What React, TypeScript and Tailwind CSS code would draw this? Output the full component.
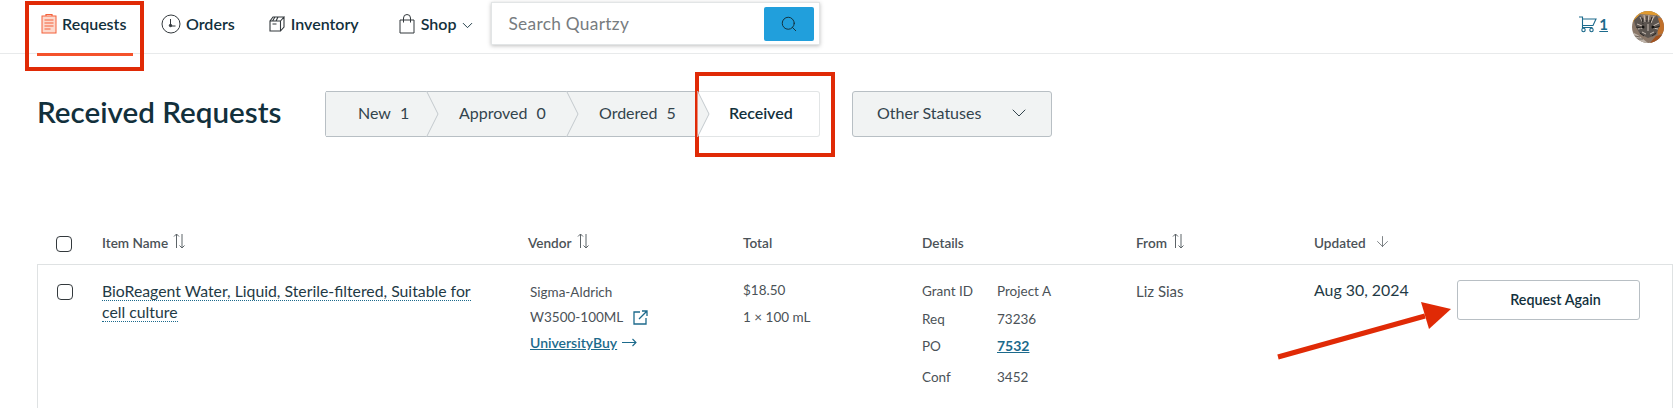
import React from 'react';
import { ChevronDown, Search, ArrowDown } from 'lucide-react';

const SortIcon = () => (
  <svg width="13" height="16" viewBox="0 0 13 16" fill="none" stroke="#5d6468" strokeWidth="1" className="ml-[5px] -mt-[4px]">
    <path d="M3.500 15V1M1 3.500 3.500 1 6 3.500M9 1v14M6.500 12.500 9 15l2.500-2.500" />
  </svg>
);

const Clipboard = () => (
  <svg width="16" height="21" viewBox="0 0 16 21" fill="none" stroke="#f4613a" strokeWidth="1">
    <rect x="1" y="3" width="14" height="17" fill="#fcd9cd" />
    <path d="M5 3V1.500h6V3M3.500 7h9M3.500 10h9M3.500 13h9M3.500 16h6" strokeWidth="1.200" />
  </svg>
);

const Clock = () => (
  <svg width="20" height="20" viewBox="0 0 20 20" fill="none" stroke="#33393d" strokeWidth="1">
    <circle cx="10" cy="10" r="9" />
    <path d="M9.500 5v7h5" />
    <circle cx="9.500" cy="11.500" r="1.200" fill="#33393d" />
  </svg>
);

const Box = () => (
  <svg width="16" height="16" viewBox="0 0 16 16" fill="none" stroke="#33393d" strokeWidth="1.100">
    <path d="M1 5h10.500v10H1zM1 5l3-4h11l-3.500 4M15 1v10l-3.500 4M3.500 8h4M6 1 3.500 5M9 1 7 5" />
  </svg>
);

const Bag = () => (
  <svg width="16" height="20" viewBox="0 0 16 20" fill="none" stroke="#33393d" strokeWidth="1">
    <path d="M1 6h14v13H1zM4.500 8.500V4a3.500 3.500 0 0 1 7 0v4.500" />
  </svg>
);

const Cart = () => (
  <svg width="18" height="17" viewBox="0 0 18 17" fill="none" stroke="#1c6a8c" strokeWidth="1.100">
    <path d="M0 1h3.500v10.500h10M3.500 3h13.500l-3 6.500H3.500" />
    <circle cx="4.500" cy="14" r="1.700" />
    <circle cx="12.500" cy="14" r="1.700" />
  </svg>
);

const LinkOut = () => (
  <svg width="15" height="15" viewBox="0 0 15 15" fill="none" stroke="#1c6a8c" strokeWidth="1.300">
    <path d="M7 2H1v12h12V8M6 9l8-8M9 1h5v5" />
  </svg>
);

const LongArrow = () => (
  <svg width="15" height="9" viewBox="0 0 15 9" fill="none" stroke="#1c6a8c" strokeWidth="1.100">
    <path d="M0 4.500h14M10.500 1 14 4.500 10.500 8" />
  </svg>
);

const Avatar = () => (
  <svg width="32" height="32" viewBox="0 0 32 32">
    <defs>
      <clipPath id="face"><circle cx="16" cy="16" r="16" /></clipPath>
    </defs>
    <g clipPath="url(#face)">
      <rect width="32" height="32" fill="#8a7768" />
      <path d="M0 0h32v6L22 4 8 3 0 12z" fill="#e09a2f" />
      <path d="M24 8l8-2v16l-6 2z" fill="#c0702b" />
      <path d="M2 9l6-5 5 5h7l5-5 3 10-4 10-8 3-8-4-5-9z" fill="#5c5550" />
      <path d="M8 6l3 6M12 4l1 7M17 4l-1 7M22 5l-3 7M5 13l5 2M27 12l-6 3M6 18l5-1M26 18l-5-1M10 21l4 2M22 21l-4 2M16 13v7" stroke="#c9beb4" strokeWidth="1" />
      <path d="M10 7l1 6M15 5v6M20 6l-2 6M4 16l5 1M28 15l-6 2M8 22l4 3M24 22l-4 3" stroke="#2b2725" strokeWidth="1" />
      <circle cx="11" cy="16" r="1.500" fill="#141210" />
      <circle cx="21" cy="16" r="1.500" fill="#141210" />
      <path d="M0 21l6 3 10 8H0z" fill="#bdb3a9" />
      <path d="M3 25l5 1M5 28l6 0" stroke="#6d6259" strokeWidth="1" />
      <path d="M32 23l-8 2-6 7h14z" fill="#a2521f" />
    </g>
  </svg>
);

const Tab = ({ label, count, width }: { label: string; count: string; width: string }) => (
  <div className={`relative flex items-center pl-[32px] pb-[2px] gap-[9px] bg-[#f1f3f3] border-y border-[#b8bfc4] text-[#33444d] ${width}`}>
    <span>{label}</span>
    <span>{count}</span>
    <svg width="13" height="46" viewBox="0 0 13 46" fill="none" className="absolute -right-[12px] -top-px z-10">
      <path d="M0.500 0 12 23 0.500 46z" fill="#f1f3f3" />
      <path d="M0.500 0 12 23 0.500 46" stroke="#c3c9cd" />
    </svg>
  </div>
);

const HeaderCell = ({ label, sort }: { label: string; sort?: boolean }) => (
  <div className="flex items-center text-[13.600px] font-semibold text-[#4b5257]">
    <span>{label}</span>
    {sort && <SortIcon />}
  </div>
);

const Checkbox = () => (
  <div className="w-4 h-4 rounded-[4px] border border-[#33393d] bg-white" />
);

export default function App() {
  return (
    <div className="relative w-[1673px] h-[408px] overflow-hidden bg-white font-['Lato','Noto_Sans',sans-serif] text-[#12303c]">
      <header className="flex h-[54px] pl-[37px] pr-[9px] border-b border-[#e8eaeb]">
        <a className="flex items-center gap-[5px] w-[96px] h-[56px] pl-1 pb-[6px] border-b-[3px] border-[#f4522b] text-[16px] font-semibold">
          <Clipboard />
          Requests
        </a>
        <a className="flex items-center gap-[5px] ml-[28px] pb-[6px] text-[16px] font-semibold">
          <Clock />
          Orders
        </a>
        <a className="flex items-center gap-[6px] ml-[34px] pb-[6px] text-[16px] font-semibold">
          <Box />
          Inventory
        </a>
        <a className="flex items-center gap-[6px] ml-[40px] pb-[6px] text-[16px] font-semibold">
          <Bag />
          Shop
          <ChevronDown size={17} strokeWidth={1.300} className="-ml-[3px] mt-[3px]" />
        </a>
        <div className="flex items-center justify-between ml-[15px] mt-[2px] w-[329px] h-[43px] pl-[16px] pr-[5px] border border-[#e2e5e6] shadow-[0_1px_4px_rgba(0,0,0,0.25)] bg-white">
          <span className="text-[17.300px] tracking-[0.3px] text-[#777c80]">Search Quartzy</span>
          <button className="flex items-center justify-center w-[50px] h-[34px] rounded-[2px] bg-[#219fdc]">
            <Search size={18} strokeWidth={1.300} color="#12303c" />
          </button>
        </div>
        <div className="flex items-center ml-auto pb-[5px]">
          <Cart />
          <span className="ml-[2px] text-[15px] font-bold text-[#1c6a8c] underline">1</span>
          <div className="ml-[24px] w-8 h-8 mt-[5px]">
            <Avatar />
          </div>
        </div>
      </header>

      <section className="flex items-start pl-[37px] mt-[37px] h-[46px]">
        <h1 className="w-[288px] text-[29.600px] font-semibold leading-[41px]">Received Requests</h1>
        <nav className="flex h-[46px] text-[16px]">
          <div className="flex w-[102px] rounded-l-[3px] border-l border-[#b8bfc4]">
            <Tab label="New" count="1" width="w-[102px]" />
          </div>
          <Tab label="Approved" count="0" width="w-[140px]" />
          <Tab label="Ordered" count="5" width="w-[131px]" />
          <div className="flex items-center w-[122px] pl-[31px] pb-[2px] rounded-r-[3px] border border-l-0 border-[#e2e5e6] font-semibold">
            Received
          </div>
        </nav>
        <button className="flex items-center justify-between w-[200px] h-[46px] ml-[32px] pl-[24px] pr-[20px] pb-[2px] rounded-[3px] bg-[#f1f3f3] border border-[#b8bfc4] text-[16px] text-[#33444d]">
          Other Statuses
          <ChevronDown size={24} strokeWidth={1} />
        </button>
      </section>

      <div className="ml-[37px] mt-[86px]">
        <div className="grid grid-cols-[65px_426px_215px_179px_214px_178px_1fr] h-[41px] items-center">
          <div className="pl-[19px]"><Checkbox /></div>
          <HeaderCell label="Item Name" sort />
          <HeaderCell label="Vendor" sort />
          <HeaderCell label="Total" />
          <HeaderCell label="Details" />
          <HeaderCell label="From" sort />
          <div className="flex items-center text-[13.600px] font-semibold text-[#4b5257]">
            Updated
            <ArrowDown size={17} strokeWidth={1} className="ml-[8px] -mt-[4px]" />
          </div>
        </div>

        <div className="grid grid-cols-[64px_426px_215px_179px_214px_178px_1fr] h-[144px] border-t border-l border-r border-[#dfe2e3] text-[13.500px] text-[#4b5257]">
          <div className="pl-[19px] pt-[19px]"><Checkbox /></div>
          <div className="w-[384px] pt-[16px] text-[15.800px] leading-[20.500px] text-[#1f3a45]">
            <span className="border-b border-dotted border-[#1c6a8c]">
              BioReagent Water, Liquid, Sterile-filtered, Suitable for cell culture
            </span>
          </div>
          <div className="pt-[15px] pl-[2px] leading-[25px]">
            <div>Sigma-Aldrich</div>
            <div className="flex items-center gap-[10px]">
              W3500-100ML
              <LinkOut />
            </div>
            <div className="flex items-center gap-[5px] text-[14px] font-semibold text-[#1c6a8c]">
              <span className="underline">UniversityBuy</span>
              <LongArrow />
            </div>
          </div>
          <div className="pt-[15px] leading-[20px]">
            <div>$18.50</div>
            <div className="mt-[7px]">1 × 100 mL</div>
          </div>
          <div className="grid grid-cols-[75px_1fr] grid-rows-[28px_27px_31px_20px] pt-[16px] leading-[20px]">
            <span>Grant ID</span><span>Project A</span>
            <span>Req</span><span>73236</span>
            <span>PO</span><span className="text-[14px] font-bold text-[#1c6a8c] underline">7532</span>
            <span>Conf</span><span>3452</span>
          </div>
          <div className="pt-[16px] text-[15px] leading-[20px]">Liz Sias</div>
          <div className="flex items-start pt-[15px]">
            <span className="w-[143px] text-[15.900px] leading-[20px] text-[#1f3a45]">Aug 30, 2024</span>
            <button className="w-[183px] h-[40px] pl-[14px] pb-[1px] rounded-[3px] border border-[#b8bfc4] bg-white text-[14.300px] font-semibold text-[#12303c]">
              Request Again
            </button>
          </div>
        </div>
      </div>

      {/* annotations drawn over the screenshot */}
      <div className="absolute left-[25px] top-[1px] w-[119px] h-[70px] border-[4px] border-[#e02a06]" />
      <div className="absolute left-[695px] top-[72px] w-[140px] h-[85px] border-[4px] border-[#e02a06]" />
      <svg width="185" height="60" viewBox="0 0 185 60" className="absolute left-[1275px] top-[302px]">
        <path d="M3 55 150 14" stroke="#e02a06" strokeWidth="5" />
        <path d="M176 7 146 0 154 27z" fill="#e02a06" />
      </svg>
    </div>
  );
}
